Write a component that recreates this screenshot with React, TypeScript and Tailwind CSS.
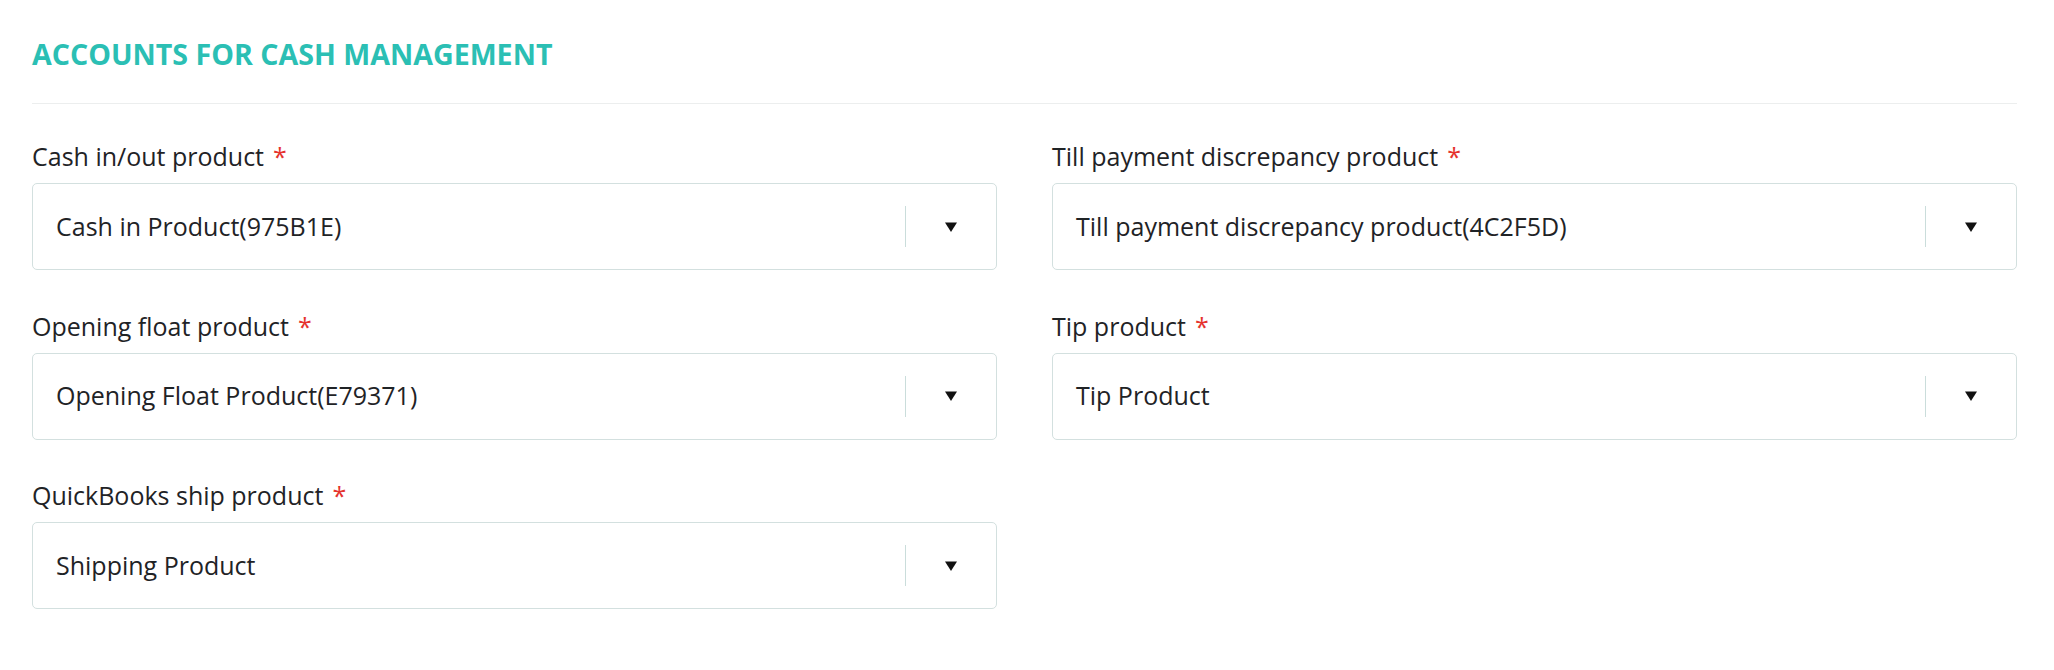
const FIELDS = [
  { label: "Cash in/out product", value: "Cash in Product(975B1E)" },
  { label: "Till payment discrepancy product", value: "Till payment discrepancy product(4C2F5D)" },
  { label: "Opening float product", value: "Opening Float Product(E79371)" },
  { label: "Tip product", value: "Tip Product" },
  { label: "QuickBooks ship product", value: "Shipping Product" },
]

function SelectField({ label, value }: { label: string; value: string }) {
  return (
    <div className="flex flex-col">
      <label className="text-[25px] leading-[34px] text-[#1f2326]">
        {label}
        <span className="ml-[9px] text-[#e5322d]">*</span>
      </label>
      <div className="mt-[10px] flex h-[87px] items-center rounded-[5px] border border-[#d3e0df] bg-white">
        <div className="flex-1 truncate pl-[23px] text-[25px] text-[#1f2326]">{value}</div>
        <span className="h-[41px] w-px bg-[#cadddb]" />
        <div className="flex w-[90px] items-center justify-center">
          <svg width="12" height="10" viewBox="0 0 12 10">
            <polygon points="0,0.5 12,0.5 6,10" fill="#111" />
          </svg>
        </div>
      </div>
    </div>
  )
}

export default function App() {
  return (
    <div className="min-h-[670px] bg-white pl-[32px] pr-[37px] pt-[34px]" style={{ fontFamily: '"Open Sans", Arial, sans-serif' }}>
      <div className="border-b border-[#eceeee] pb-[29px]">
        <h2 className="text-[28.6px] font-bold leading-[40px] text-[#2bbfb4]">ACCOUNTS FOR CASH MANAGEMENT</h2>
      </div>
      <div className="mt-[35px] grid grid-cols-2 gap-x-[55px] gap-y-[38.5px]">
        {FIELDS.map((f) => (
          <SelectField key={f.label} label={f.label} value={f.value} />
        ))}
      </div>
    </div>
  )
}
